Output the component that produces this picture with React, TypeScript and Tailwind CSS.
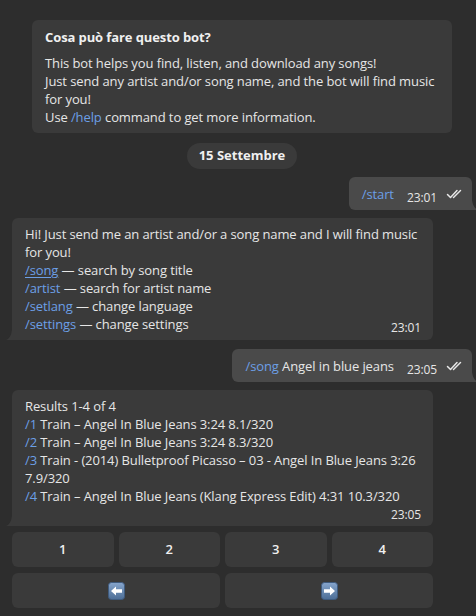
import React from 'react';

const font = { fontFamily: '"Open Sans", "Noto Sans", sans-serif' };

const Link: React.FC<{ children: React.ReactNode; underline?: boolean }> = ({ children, underline }) => (
  <span className={`text-[#6c9fe6] ${underline ? 'underline underline-offset-2' : ''}`}>{children}</span>
);

const Checks = () => (
  <svg width="17" height="10" viewBox="0 0 17 10" fill="none" className="ml-[9px] mb-[4px]">
    <path d="M1.5 5.5 L4.5 8.5 L11 1.5" stroke="#e8e8e8" strokeWidth="1.5" strokeLinecap="round" strokeLinejoin="round" />
    <path d="M7.5 8.5 L14.5 1.5" stroke="#e8e8e8" strokeWidth="1.5" strokeLinecap="round" strokeLinejoin="round" />
  </svg>
);

const TailLeft = () => (
  <svg width="8" height="10" viewBox="0 0 8 10" className="absolute -left-[6px] bottom-0">
    <path d="M8 0 L8 10 L0 10 Q5 8 6 0 Z" fill="#3a3a3a" />
  </svg>
);

const TailRight = () => (
  <svg width="8" height="10" viewBox="0 0 8 10" className="absolute -right-[6px] bottom-0">
    <path d="M0 0 L0 10 L8 10 Q3 8 2 0 Z" fill="#4a4a4a" />
  </svg>
);

const Incoming: React.FC<{ children: React.ReactNode; pb?: string }> = ({ children, pb = 'pb-[7px]' }) => (
  <div className={`relative w-[421px] rounded-[6px] rounded-bl-none bg-[#3a3a3a] pl-[13px] pr-[12px] pt-[7px] ${pb} text-[13px] leading-[18px] tracking-[-0.1px] text-[#e6e6e6]`}>
    {children}
    <TailLeft />
  </div>
);

const Outgoing: React.FC<{ children: React.ReactNode; time: string }> = ({ children, time }) => (
  <div className="relative ml-auto flex items-end rounded-[6px] rounded-br-none bg-[#4a4a4a] pl-[13px] pr-[9px] pt-[8px] pb-[7px] text-[13px] leading-[18px] tracking-[-0.1px] text-[#e6e6e6]">
    <span>{children}</span>
    <span className="ml-[13px] text-[12px] leading-[14px] translate-y-[2px] text-[#e6e6e6]">{time}</span>
    <Checks />
    <TailRight />
  </div>
);

const Btn: React.FC<{ children: React.ReactNode }> = ({ children }) => (
  <div className="flex h-[35px] items-center justify-center rounded-[6px] bg-[#3a3a3a] text-[13px] font-semibold text-[#f0f0f0]">
    {children}
  </div>
);

const ArrowIcon: React.FC<{ dir: 'left' | 'right' }> = ({ dir }) => (
  <svg width="17" height="18" viewBox="0 0 17 18">
    <defs>
      <linearGradient id={`g-${dir}`} x1="0" y1="0" x2="0" y2="1">
        <stop offset="0" stopColor="#86a5cc" />
        <stop offset="1" stopColor="#4d6e96" />
      </linearGradient>
    </defs>
    <rect x="0.5" y="0.5" width="16" height="17" rx="3" fill={`url(#g-${dir})`} stroke="#3f5b7e" strokeWidth="1" />
    {dir === 'left' ? (
      <path d="M3 9 L8 4.5 L8 7.3 L14 7.3 L14 10.7 L8 10.7 L8 13.5 Z" fill="#ffffff" />
    ) : (
      <path d="M14 9 L9 4.5 L9 7.3 L3 7.3 L3 10.7 L9 10.7 L9 13.5 Z" fill="#ffffff" />
    )}
  </svg>
);

export default function App() {
  return (
    <div className="min-h-[616px] w-[476px] overflow-hidden bg-[#2d2d2d]" style={font}>
      <div className="flex flex-col pl-[12px] pr-[4px] pt-[20px]">
        <div className="mx-[20px] rounded-[6px] bg-[#3a3a3a] px-[13px] pt-[8px] pb-[7px] text-[13px] leading-[18px] tracking-[-0.1px] text-[#e6e6e6]">
          <div className="font-bold text-[#f0f0f0]">Cosa può fare questo bot?</div>
          <div className="mt-[8px]">
            This bot helps you find, listen, and download any songs!
            <br />
            Just send any artist and/or song name, and the bot will find music for you!
            <br />
            Use <Link>/help</Link> command to get more information.
          </div>
        </div>

        <div className="mt-[10px] flex justify-center">
          <div className="flex h-[26px] items-center rounded-full bg-[#3a3a3a] px-[12px] text-[13px] font-bold text-[#f0f0f0]">
            15 Settembre
          </div>
        </div>

        <div className="mt-[8px] flex">
          <Outgoing time="23:01">
            <Link>/start</Link>
          </Outgoing>
        </div>

        <div className="mt-[8px]">
          <Incoming>
            <div>Hi! Just send me an artist and/or a song name and I will find music for you!</div>
            <div>
              <Link underline>/song</Link> — search by song title
            </div>
            <div>
              <Link>/artist</Link> — search for artist name
            </div>
            <div>
              <Link>/setlang</Link> — change language
            </div>
            <div className="flex items-end justify-between">
              <span>
                <Link>/settings</Link> — change settings
              </span>
              <span className="text-[12px] leading-[14px] translate-y-[2px]">23:01</span>
            </div>
          </Incoming>
        </div>

        <div className="mt-[9px] flex">
          <Outgoing time="23:05">
            <Link>/song</Link> Angel in blue jeans
          </Outgoing>
        </div>

        <div className="mt-[8px]">
          <Incoming pb="pb-[4px]">
            <div>Results 1-4 of 4</div>
            <div>
              <Link>/1</Link> Train – Angel In Blue Jeans 3:24 8.1/320
            </div>
            <div>
              <Link>/2</Link> Train – Angel In Blue Jeans 3:24 8.3/320
            </div>
            <div>
              <Link>/3</Link> Train - (2014) Bulletproof Picasso – 03 - Angel In Blue Jeans 3:26 7.9/320
            </div>
            <div>
              <Link>/4</Link> Train – Angel In Blue Jeans (Klang Express Edit) 4:31 10.3/320
            </div>
            <div className="flex h-[17px] items-end justify-end text-[12px] leading-[14px]">23:05</div>
          </Incoming>
        </div>

        <div className="mt-[6px] grid w-[421px] grid-cols-4 gap-[5px]">
          <Btn>1</Btn>
          <Btn>2</Btn>
          <Btn>3</Btn>
          <Btn>4</Btn>
        </div>
        <div className="mt-[6px] grid w-[421px] grid-cols-2 gap-[5px]">
          <Btn>
            <ArrowIcon dir="left" />
          </Btn>
          <Btn>
            <ArrowIcon dir="right" />
          </Btn>
        </div>
      </div>
    </div>
  );
}
